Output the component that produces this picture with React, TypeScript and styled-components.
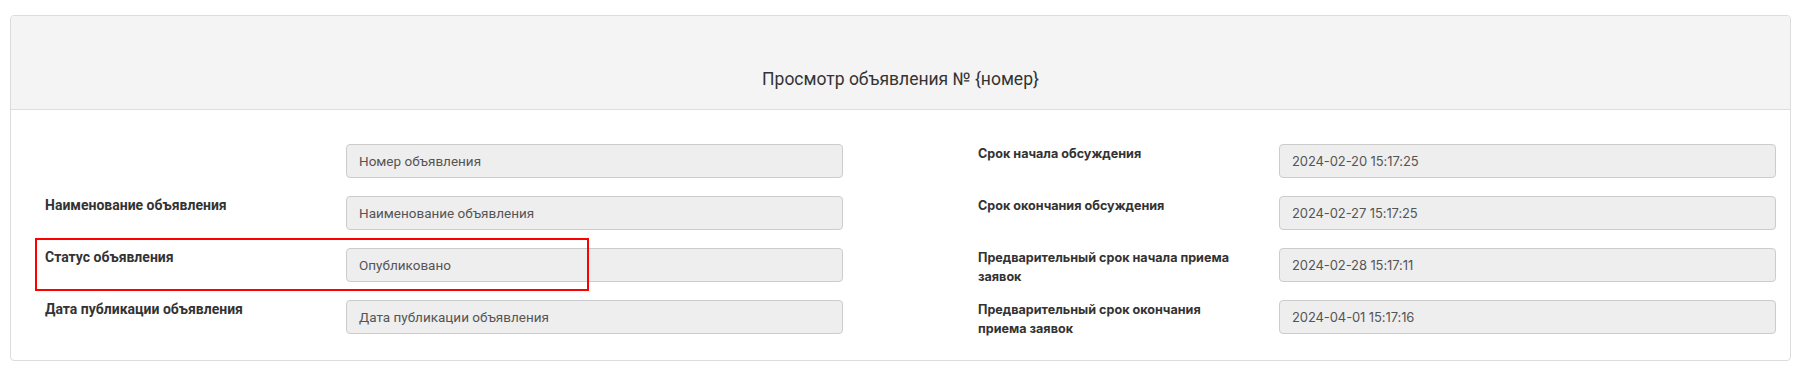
import React from 'react'
import styled, { createGlobalStyle } from 'styled-components'

const GlobalStyle = createGlobalStyle`
  html, body {
    margin: 0;
    padding: 0;
    background: #ffffff;
  }
  body {
    font-family: Roboto, 'Liberation Sans', sans-serif;
    color: #333333;
  }
`

type Field = {
  label?: string
  value: string
}

const leftFields: Field[] = [
  { value: 'Номер объявления' },
  { label: 'Наименование объявления', value: 'Наименование объявления' },
  { label: 'Статус объявления', value: 'Опубликовано' },
  { label: 'Дата публикации объявления', value: 'Дата публикации объявления' },
]

const rightFields: Field[] = [
  { label: 'Срок начала обсуждения', value: '2024-02-20 15:17:25' },
  { label: 'Срок окончания обсуждения', value: '2024-02-27 15:17:25' },
  { label: 'Предварительный срок начала приема заявок', value: '2024-02-28 15:17:11' },
  { label: 'Предварительный срок окончания приема заявок', value: '2024-04-01 15:17:16' },
]

const App: React.FC = () => {
  return (
    <>
      <GlobalStyle />
      <Page>
        <Card>
          <Header>
            <Title>Просмотр объявления № {'{номер}'}</Title>
          </Header>
          <Body>
            {leftFields.map((left, i) => {
              const right = rightFields[i]
              return (
                <React.Fragment key={i}>
                  <Label>
                    {left.label}
                    {i === 2 && <Highlight />}
                  </Label>
                  <Input>{left.value}</Input>
                  <Spacer />
                  <Label $font="inter">{right.label}</Label>
                  <Input $font="inter">{right.value}</Input>
                </React.Fragment>
              )
            })}
          </Body>
        </Card>
      </Page>
    </>
  )
}

const Page = styled.div`
  padding: 15px 10px;
`

const Card = styled.div`
  border: 1px solid #dcdcdc;
  border-radius: 4px;
  background: #ffffff;
  overflow: hidden;
`

const Header = styled.div`
  height: 94px;
  box-sizing: border-box;
  display: flex;
  align-items: flex-end;
  justify-content: center;
  padding-bottom: 18px;
  background: #f4f4f4;
  border-bottom: 1px solid #dddddd;
`

const Title = styled.div`
  font-family: Roboto, 'Liberation Sans', sans-serif;
  font-size: 17.5px;
  line-height: 24px;
  color: #333333;
`

const Body = styled.div`
  display: grid;
  grid-template-columns: 311px 497px 125px 311px 497px;
  grid-auto-rows: 34px;
  row-gap: 18px;
  padding: 34px 12px 26px 24px;
`

const Label = styled.div<{ $font?: 'inter' }>`
  position: relative;
  padding: 0 36px 0 10px;
  font-family: ${(p) => (p.$font === 'inter' ? "Inter, 'Noto Sans', sans-serif" : "Roboto, 'Liberation Sans', sans-serif")};
  font-size: ${(p) => (p.$font === 'inter' ? '12.6px' : '14px')};
  font-weight: 700;
  line-height: 19px;
  color: #333333;
`

const Highlight = styled.span`
  position: absolute;
  left: 0;
  top: -10px;
  width: 554px;
  height: 53px;
  box-sizing: border-box;
  border: 2px solid #ff0000;
  pointer-events: none;
`

const Input = styled.div<{ $font?: 'inter' }>`
  height: 34px;
  box-sizing: border-box;
  display: flex;
  align-items: center;
  padding: 0 12px;
  background: #eeeeee;
  border: 1px solid #cccccc;
  border-radius: 4px;
  font-family: ${(p) => (p.$font === 'inter' ? "Inter, 'Noto Sans', sans-serif" : "Roboto, 'Liberation Sans', sans-serif")};
  font-size: ${(p) => (p.$font === 'inter' ? '13px' : '13.5px')};
  letter-spacing: ${(p) => (p.$font === 'inter' ? '-0.1px' : 'normal')};
  color: #555555;
  white-space: nowrap;
`

const Spacer = styled.div``

export default App
